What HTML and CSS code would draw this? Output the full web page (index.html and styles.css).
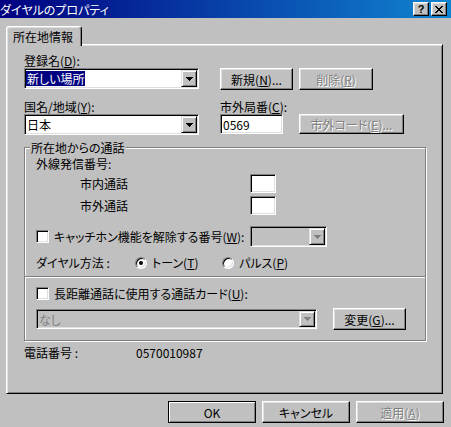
FILE: index.html
```html
<!DOCTYPE html>
<html lang="ja">
<head>
    <meta charset="UTF-8">
    <meta name="viewport" content="width=device-width, initial-scale=1.0">
    <title>ダイヤルのプロパティ</title>
    <link rel="stylesheet" href="styles.css">
</head>
<body>

<div class="window">
    <div class="titlebar">
        <span class="title">ダイヤルのプロパティ</span>
        <div class="caption-buttons">
            <button class="cap-btn">?</button>
            <button class="cap-btn">
                <svg width="8" height="7" viewBox="0 0 8 7" shape-rendering="crispEdges">
                    <path d="M0 0h2v1H0zM6 0h2v1H6zM1 1h2v1H1zM5 1h2v1H5zM2 2h4v1H2zM3 3h2v1H3zM2 4h4v1H2zM1 5h2v1H1zM5 5h2v1H5zM0 6h2v1H0zM6 6h2v1H6z"/>
                </svg>
            </button>
        </div>
    </div>

    <div class="tabs">
        <div class="tab">所在地情報</div>
    </div>

    <div class="panel">
        <div class="line">登録名(<u>D</u>):</div>
        <div class="controls first">
            <div class="combo wide">
                <span class="combo-text"><span class="sel">新しい場所</span></span>
                <span class="combo-arrow">
                    <svg width="7" height="4" viewBox="0 0 7 4" shape-rendering="crispEdges"><path d="M0 0h7v1H0zM1 1h5v1H1zM2 2h3v1H2zM3 3h1v1H3z"/></svg>
                </span>
            </div>
            <button class="btn btn-new">新規(<u>N</u>)...</button>
            <button class="btn btn-del" disabled>削除(<u>R</u>)</button>
        </div>

        <div class="line labels">
            <span class="left-col">国名/地域(<u>Y</u>):</span>
            <span>市外局番(<u>C</u>):</span>
        </div>
        <div class="controls second">
            <div class="combo wide">
                <span class="combo-text">日本</span>
                <span class="combo-arrow">
                    <svg width="7" height="4" viewBox="0 0 7 4" shape-rendering="crispEdges"><path d="M0 0h7v1H0zM1 1h5v1H1zM2 2h3v1H2zM3 3h1v1H3z"/></svg>
                </span>
            </div>
            <input class="field area-code" type="text" value="0569">
            <button class="btn btn-code" disabled>市外コード(<u>E</u>)...</button>
        </div>

        <!-- calls from this location -->
        <div class="group calls">
            <span class="group-title">所在地からの通話</span>
            <div class="line">外線発信番号:</div>
            <div class="field-row local">
                <span class="row-label indent">市内通話</span>
                <input class="field small" type="text">
            </div>
            <div class="field-row long">
                <span class="row-label indent">市外通話</span>
                <input class="field small" type="text">
            </div>
            <div class="field-row callwait">
                <span class="row-label">
                    <span class="check"></span>
                    <span>キャッチホン機能を解除する番号(<u>W</u>):</span>
                </span>
                <div class="combo disabled wait-combo">
                    <span class="combo-text"></span>
                    <span class="combo-arrow">
                        <svg width="7" height="4" viewBox="0 0 7 4" shape-rendering="crispEdges"><path d="M0 0h7v1H0zM1 1h5v1H1zM2 2h3v1H2zM3 3h1v1H3z"/></svg>
                    </span>
                </div>
            </div>
            <div class="field-row dial">
                <span class="dial-label">ダイヤル方法 :</span>
                <span class="radio-option tone"><span class="radio on"></span><span>トーン(<u>T</u>)</span></span>
                <span class="radio-option"><span class="radio"></span><span>パルス(<u>P</u>)</span></span>
            </div>
        </div>

        <!-- calling card -->
        <div class="group card">
            <div class="field-row card-check">
                <span class="check"></span>
                <span>長距離通話に使用する通話カード(<u>U</u>):</span>
            </div>
            <div class="field-row card-select">
                <div class="combo disabled card-combo">
                    <span class="combo-text">なし</span>
                    <span class="combo-arrow">
                        <svg width="7" height="4" viewBox="0 0 7 4" shape-rendering="crispEdges"><path d="M0 0h7v1H0zM1 1h5v1H1zM2 2h3v1H2zM3 3h1v1H3z"/></svg>
                    </span>
                </div>
                <button class="btn btn-change">変更(<u>G</u>)...</button>
            </div>
        </div>

        <div class="phone">
            <span class="phone-label">電話番号 :</span>
            <span>0570010987</span>
        </div>
    </div>

    <div class="footer">
        <button class="btn btn-footer default">OK</button>
        <button class="btn btn-footer">キャンセル</button>
        <button class="btn btn-footer" disabled>適用(<u>A</u>)</button>
    </div>
</div>

</body>
</html>
```

FILE: styles.css
```css
* {
    box-sizing: border-box;
}
body {
    margin: 0;
    width: 451px;
    height: 427px;
    overflow: hidden;
    background: #c0c0c0;
    font-family: "Noto Sans CJK JP", "Noto Sans", sans-serif;
    font-size: 12px;
    line-height: 13px;
    font-feature-settings: "palt";
    color: #000;
}
button, input {
    font: inherit;
    font-feature-settings: "palt";
    color: #000;
    margin: 0;
}
u {
    text-underline-offset: 1px;
}

/* title bar */
.titlebar {
    height: 18px;
    display: flex;
    align-items: center;
    justify-content: space-between;
    padding-right: 4px;
    background: linear-gradient(to right, #000080, #1084d0);
    color: #fff;
}
.caption-buttons {
    display: flex;
    gap: 2px;
}
.cap-btn {
    width: 16px;
    height: 14px;
    padding: 0;
    display: flex;
    align-items: center;
    justify-content: center;
    background: #c0c0c0;
    border: 1px solid;
    border-color: #fff #000 #000 #fff;
    box-shadow: inset -1px -1px #808080, inset 1px 1px #dfdfdf;
    font-family: "Liberation Sans", sans-serif;
    font-weight: bold;
    font-size: 11px;
    line-height: 1;
}

/* tab */
.tabs {
    display: flex;
    padding: 8px 0 0 6px;
}
.tab {
    position: relative;
    z-index: 1;
    width: 76px;
    height: 20px;
    margin-bottom: -2px;
    padding: 3px 0 0 6px;
    background: #c0c0c0;
    border: 1px solid;
    border-bottom: 0;
    border-color: #fff #000 #c0c0c0 #fff;
    border-radius: 3px 3px 0 0;
    box-shadow: inset -1px 0 #808080, inset 1px 1px #dfdfdf;
}
.panel {
    margin-left: 6px;
    width: 437px;
    height: 350px;
    padding: 9px 0 0 17px;
    border: 1px solid;
    border-color: #fff #000 #000 #fff;
    box-shadow: inset 1px 1px #dfdfdf, inset -1px -1px #808080;
}

.line {
    height: 13px;
}
.labels {
    display: flex;
    margin-top: 10px;
}
.left-col {
    width: 196px;
}
.controls {
    display: flex;
    align-items: flex-start;
    margin-top: 1px;
}
.first {
    height: 22px;
}
.second {
    height: 20px;
}

/* controls */
.btn {
    height: 22px;
    padding: 0;
    background: #c0c0c0;
    border: 1px solid;
    border-color: #fff #000 #000 #fff;
    box-shadow: inset -1px -1px #808080, inset 1px 1px #dfdfdf;
    white-space: nowrap;
}
.btn.default {
    border-color: #000;
    box-shadow: inset 1px 1px #fff, inset -1px -1px #808080;
}
.btn:disabled {
    color: #808080;
    text-shadow: 1px 1px #fff;
}
.btn-new {
    width: 73px;
    margin-left: 21px;
}
.btn-del {
    width: 74px;
    margin-left: 6px;
}
.btn-code {
    width: 105px;
    height: 20px;
    margin-left: 16px;
}
.btn-change {
    width: 73px;
    margin-left: 16px;
}

.combo {
    display: flex;
    height: 21px;
    padding: 1px;
    background: #fff;
    border: 1px solid;
    border-color: #808080 #fff #fff #808080;
    box-shadow: inset 1px 1px #000, inset -1px -1px #dfdfdf;
}
.combo.wide {
    width: 175px;
}
.combo.disabled {
    background: #c0c0c0;
    color: #808080;
}
.combo.disabled svg {
    fill: #808080;
}
.combo-text {
    flex: 1;
    display: flex;
    align-items: center;
    padding-left: 1px;
    white-space: nowrap;
    overflow: hidden;
}
.sel {
    margin-left: -1px;
    padding: 1px 1px;
    background: #000080;
    color: #fff;
}
.combo-arrow {
    width: 16px;
    display: flex;
    align-items: center;
    justify-content: center;
    background: #c0c0c0;
    border: 1px solid;
    border-color: #dfdfdf #000 #000 #dfdfdf;
    box-shadow: inset 1px 1px #fff, inset -1px -1px #808080;
}

.field {
    height: 20px;
    padding: 0 2px;
    background: #fff;
    border: 1px solid;
    border-color: #808080 #fff #fff #808080;
    box-shadow: inset 1px 1px #000, inset -1px -1px #dfdfdf;
    outline: none;
}
.area-code {
    width: 63px;
    margin-left: 21px;
}
.field.small {
    width: 26px;
    height: 19px;
}

.check {
    flex: none;
    width: 13px;
    height: 13px;
    background: #fff;
    border: 1px solid;
    border-color: #808080 #fff #fff #808080;
    box-shadow: inset 1px 1px #000, inset -1px -1px #dfdfdf;
}
.radio {
    flex: none;
    width: 12px;
    height: 12px;
    display: flex;
    align-items: center;
    justify-content: center;
    border-radius: 50%;
    background: #fff;
    border: 1px solid;
    border-color: #808080 #fff #fff #808080;
    box-shadow: inset 1px 1px #000, inset -1px -1px #dfdfdf;
}
.radio.on::after {
    content: "";
    width: 4px;
    height: 4px;
    border-radius: 50%;
    background: #000;
}

/* group boxes */
.group {
    position: relative;
    width: 402px;
    padding: 9px 0 0 11px;
    border: 1px solid #808080;
    box-shadow: inset 1px 1px #fff, 1px 1px #fff;
}
.group-title {
    position: absolute;
    top: -7px;
    left: 5px;
    padding: 0 1px;
    background: #c0c0c0;
}
.calls {
    margin-top: 13px;
    height: 130px;
}
.card {
    margin-top: -1px;
    height: 65px;
}

.field-row {
    display: flex;
    align-items: center;
}
.row-label {
    width: 214px;
    display: flex;
    align-items: center;
    gap: 5px;
    white-space: nowrap;
}
.indent {
    padding-left: 44px;
}
.local {
    margin-top: 4px;
    height: 19px;
}
.long {
    margin-top: 3px;
    height: 19px;
}
.callwait {
    margin-top: 11px;
    height: 21px;
}
.wait-combo {
    width: 77px;
}
.dial {
    margin-top: 9px;
    height: 13px;
}
.dial-label {
    width: 99px;
}
.radio-option {
    display: flex;
    align-items: center;
    gap: 5px;
}
.tone {
    width: 87px;
}

.card-check {
    height: 15px;
    gap: 5px;
}
.card-select {
    margin-top: 7px;
    height: 22px;
}
.card-combo {
    width: 281px;
    height: 20px;
}

.phone {
    display: flex;
    margin-top: 5px;
    height: 13px;
}
.phone-label {
    width: 112px;
}

/* dialog buttons */
.footer {
    display: flex;
    justify-content: flex-end;
    gap: 6px;
    margin-top: 7px;
    padding-right: 7px;
}
.btn-footer {
    width: 88px;
}
```
